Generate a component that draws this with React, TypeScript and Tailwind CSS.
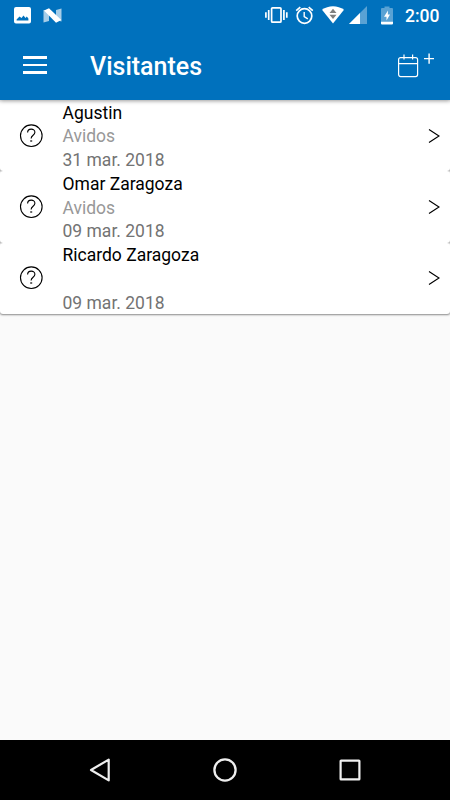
interface Visitor {
  id: number
  name: string
  place: string
  date: string
}

const visitors: Visitor[] = [
  { id: 1, name: 'Agustin', place: 'Avidos', date: '31 mar. 2018' },
  { id: 2, name: 'Omar Zaragoza', place: 'Avidos', date: '09 mar. 2018' },
  { id: 3, name: 'Ricardo Zaragoza', place: '', date: '09 mar. 2018' }
]

function StatusBar() {
  return (
    <div className="flex h-[30px] items-center pl-3.5 pr-[10px] text-white">
      {/* Notifications */}
      <svg width="17" height="17" viewBox="0 0 17 17">
        <path
          fill="currentColor"
          fillRule="evenodd"
          d="M2 0h13a2 2 0 0 1 2 2v12.5a2 2 0 0 1-2 2H2a2 2 0 0 1-2-2V2a2 2 0 0 1 2-2ZM2.6 13.5h11.8v-2L12.800 9.500l-1.300 1.500-2-2.500L7.500 11 5.500 9.500 2.600 12.500Z"
        />
      </svg>
      <svg className="ml-3" width="19" height="15" viewBox="0 0 19 15">
        <path fill="#fff" fillOpacity=".65" d="M.5 2 6 3.5V13L.5 14.5ZM18.5 .5 13 2v10l5.500 1.500Z" />
        <path fill="#fff" d="M1 2.500 6 .300 18.300 12 13 14.700Z" />
      </svg>

      {/* System icons */}
      <div className="ml-auto flex items-center">
        <svg width="24" height="18" viewBox="0 0 24 18" fill="none" stroke="currentColor" strokeWidth="1.700">
          <rect x="6.600" y="1.800" width="9.400" height="14.400" rx="1" />
          <path d="M3.700 4v10M.900 6.200v5.600M18.900 4v10M21.800 6.200v5.600" />
        </svg>
        <svg className="ml-[6px] mr-px" width="19" height="19" viewBox="0 0 19 19" fill="none" stroke="currentColor" strokeWidth="1.700">
          <circle cx="9.500" cy="10" r="7.300" />
          <path d="M1.200 4.600 5.300 1.200M17.800 4.600l-4.100-3.400" />
          <path d="M9.200 6v4.700l3.600 2.200" strokeWidth="1.400" />
        </svg>
        <svg className="ml-[7px]" width="22" height="18" viewBox="0 0 22 18">
          <path fill="currentColor" d="M0 3.800C6.200-1 15.800-1 22 3.800L11 17.500Z" />
          <path fill="#7f7f7f" d="M7.500 7 11 2.800 14.500 7ZM7.500 8.800h7L11 13Z" />
        </svg>
        <svg className="ml-[5px]" width="18" height="18" viewBox="0 0 18 18">
          <path fill="#fff" fillOpacity=".35" d="M18 0v18H0Z" />
          <path fill="#fff" d="M11 7v11H0Z" />
        </svg>
        <svg className="ml-3.5" width="12" height="19" viewBox="0 0 12 19">
          <path fill="#fff" fillOpacity=".35" d="M1 2h2.500V.500h5V2H11q1 0 1 1v13H0V3q0-1 1-1Z" />
          <path fill="#fff" d="M0 15.800h12v1.600q0 1-1 1H1q-1 0-1-1ZM7 4.500 3 10.700h2.500v3.800L9 8.500H6.800Z" />
        </svg>
        <span className="ml-[12px] mt-px w-[35px] text-[17.500px] font-medium leading-5">2:00</span>
      </div>
    </div>
  )
}

function AppBar() {
  return (
    <header className="relative z-10 bg-[#0071bd] shadow-[0_1px_4px_rgba(0,0,0,0.4)]">
      <StatusBar />
      <div className="flex h-[70px] items-center pl-[23px] pr-[16px] text-white">
        <button aria-label="Menu" className="flex w-6 flex-col gap-[5px]">
          <span className="h-[2.500px] bg-white" />
          <span className="h-[2.500px] bg-white" />
          <span className="h-[2.500px] bg-white" />
        </button>
        <h1 className="ml-[43px] mt-[3px] text-[25px] font-medium leading-8">Visitantes</h1>
        <button aria-label="Agregar" className="ml-auto mt-[2px]">
          <svg width="37" height="26" viewBox="0 0 37 26" fill="none" stroke="currentColor" strokeWidth="1.200">
            <rect x="1.600" y="4.600" width="19" height="19" rx="2" />
            <path d="M1.600 10.600h19M7 1.500v5M15.600 1.500v5" />
            <path d="M27 5.600h10.500M32.100 .500v10.200" strokeWidth="1.400" />
          </svg>
        </button>
      </div>
    </header>
  )
}

function VisitorCard({ visitor }: { visitor: Visitor }) {
  return (
    <li className="flex h-[71.330px] items-center rounded-[3px] bg-white pl-[19px] pr-[10px] shadow-[0_1.500px_2px_-0.500px_rgba(0,0,0,0.45)]">
      <svg width="24" height="24" viewBox="0 0 24 24" fill="none" stroke="#000">
        <circle cx="12.300" cy="11.700" r="10.800" strokeWidth="1.100" />
        <path d="M8.600 8.600C8.600 4 15.900 4.100 15.900 8.300c0 2.900-3.800 3-3.800 6.200" strokeWidth="1.100" />
        <path d="M11.200 17h2" strokeWidth="1.200" />
      </svg>
      <div className="ml-[19.500px] mt-[3px] flex-1 text-[17.500px] leading-[23.750px]">
        <p className="h-[23.750px] text-black">{visitor.name}</p>
        <p className="h-[23.750px] text-[#989898]">{visitor.place}</p>
        <p className="h-[23.750px] text-[#737373]">{visitor.date}</p>
      </div>
      <svg width="12" height="16" viewBox="0 0 12 16" fill="none" stroke="#000" strokeWidth="1.200">
        <path d="m1 1.500 10 6.500L1 14.500" />
      </svg>
    </li>
  )
}

function NavigationBar() {
  return (
    <nav className="flex h-[60px] items-center justify-between bg-black pl-[89px] pr-[89px] text-[#eee]">
      <svg width="22" height="26" viewBox="0 0 22 26" fill="none" stroke="currentColor" strokeWidth="2.200" strokeLinejoin="round">
        <path d="M19.700 2.600v20.800L2 13Z" />
      </svg>
      <svg width="26" height="26" viewBox="0 0 26 26" fill="none" stroke="currentColor" strokeWidth="2.300">
        <circle cx="13" cy="13" r="10.600" />
      </svg>
      <svg width="22" height="22" viewBox="0 0 22 22" fill="none" stroke="currentColor" strokeWidth="2.200">
        <rect x="1.600" y="1.600" width="18.800" height="18.800" rx=".500" />
      </svg>
    </nav>
  )
}

export default function App() {
  return (
    <div className="flex h-[800px] w-[450px] flex-col overflow-hidden bg-[#fafafa] font-[Roboto,sans-serif]">
      <AppBar />
      <main className="flex-1">
        <ul>
          {visitors.map(visitor => (
            <VisitorCard key={visitor.id} visitor={visitor} />
          ))}
        </ul>
      </main>
      <NavigationBar />
    </div>
  )
}
